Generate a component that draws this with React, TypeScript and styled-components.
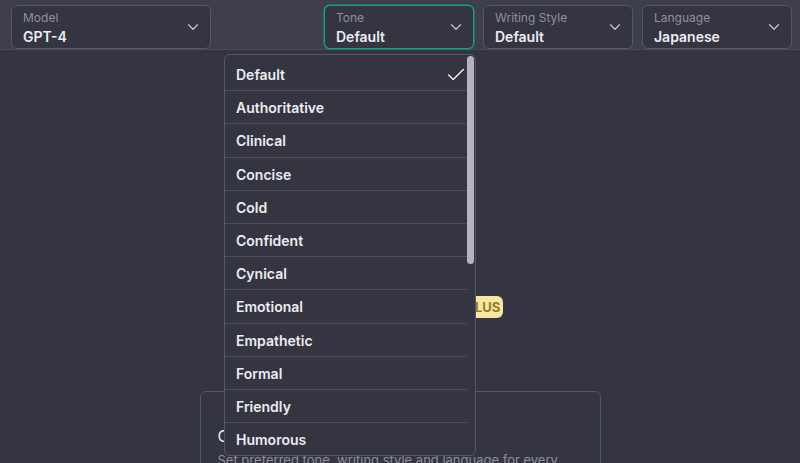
import React from 'react';
import styled, { createGlobalStyle, css } from 'styled-components';
import { Check, ChevronDown } from 'lucide-react';

const GlobalStyle = createGlobalStyle`
  html, body {
    margin: 0;
    padding: 0;
    background: #343541;
  }
  body {
    font-family: Inter, 'Noto Sans', 'Liberation Sans', sans-serif;
    -webkit-font-smoothing: antialiased;
  }
  * {
    box-sizing: border-box;
  }
`;

const Page = styled.div`
  height: 463px;
  overflow: hidden;
  display: flex;
  flex-direction: column;
  background: #343541;
  color: #ececf1;
`;

const TopBar = styled.header`
  height: 54px;
  display: flex;
  align-items: flex-start;
  gap: 9px;
  padding: 5px 8px 0 11px;
  background: #3e3f4b;
  border-bottom: 1px solid #4b4c58;
  position: relative;
  z-index: 2;
`;

const SelectWrap = styled.div<{ $width: number; $push?: boolean }>`
  position: relative;
  width: ${(p) => p.$width}px;
  ${(p) =>
    p.$push &&
    css`
      margin-right: auto;
    `}
`;

const SelectBox = styled.div<{ $active?: boolean }>`
  height: 44px;
  display: flex;
  align-items: center;
  justify-content: space-between;
  padding: 0 8px 0 11px;
  background: #343541;
  border: 1px solid ${(p) => (p.$active ? '#10a37f' : '#565869')};
  box-shadow: ${(p) => (p.$active ? '0 0 0 0.5px #10a37f' : 'none')};
  border-radius: 6px;
  color: #c5c5d2;
`;

const SelectText = styled.div`
  display: flex;
  flex-direction: column;
`;

const SelectLabel = styled.span`
  font-size: 12px;
  line-height: 14px;
  color: #8e8ea0;
  margin-top: 2px;
`;

const SelectValue = styled.span`
  font-size: 14px;
  line-height: 18px;
  font-weight: 600;
  color: #ececf1;
  margin-top: 3px;
`;

const Menu = styled.div`
  position: absolute;
  top: 49px;
  left: -100px;
  width: 252px;
  height: 402px;
  background: #343541;
  border: 1px solid #565869;
  border-radius: 6px;
  overflow: hidden;
  z-index: 5;
`;

const MenuList = styled.ul`
  list-style: none;
  margin: 0;
  padding: 3px 8px 0 0;
  height: 100%;
  overflow-y: auto;
  scrollbar-width: none;

  &::-webkit-scrollbar {
    display: none;
  }
`;

const ScrollThumb = styled.div`
  position: absolute;
  top: 1px;
  right: 1px;
  width: 7px;
  height: 208px;
  border-radius: 4px;
  background: #b4b4be;
`;

const MenuItem = styled.li`
  height: 33.2px;
  display: flex;
  align-items: center;
  justify-content: space-between;
  padding: 1px 0 0 11px;
  border-bottom: 1px solid #4d4e5a;
  font-size: 14px;
  font-weight: 600;
  color: #ececf1;
`;

const Main = styled.main`
  flex: 1;
  display: flex;
  flex-direction: column;
  align-items: center;
  padding-top: 235px;
  gap: 62px;
`;

const TitleRow = styled.div`
  height: 44px;
  display: flex;
  align-items: center;
  gap: 6px;
  margin-left: 2px;
`;

const Title = styled.h1`
  margin: 0;
  font-size: 36px;
  font-weight: 600;
  color: #d9d9e3;
`;

const Badge = styled.span`
  padding: 2px 3px 2px 6px;
  border-radius: 6px;
  background: #fae69e;
  color: #927c2f;
  font-size: 13px;
  line-height: 18px;
  font-weight: 700;
`;

const Card = styled.section`
  width: 401px;
  flex-shrink: 0;
  padding: 32px 17px;
  border: 1px solid #565869;
  border-radius: 6px;
`;

const CardHeading = styled.h2`
  margin: 0;
  font-size: 16px;
  line-height: 24px;
  font-weight: 400;
  color: #ececf1;
`;

const CardText = styled.p`
  margin: 2px 0 0;
  font-size: 13px;
  line-height: 20px;
  color: #8e8ea0;
`;

const tones = [
  'Default',
  'Authoritative',
  'Clinical',
  'Concise',
  'Cold',
  'Confident',
  'Cynical',
  'Emotional',
  'Empathetic',
  'Formal',
  'Friendly',
  'Humorous',
  'Informative',
  'Inspirational',
  'Ironic',
  'Optimistic',
  'Pessimistic',
  'Playful',
  'Sarcastic',
  'Serious',
  'Sympathetic',
  'Tentative',
  'Warm',
];

function Select({ label, value, width, active, push, children }: {
  label: string;
  value: string;
  width: number;
  active?: boolean;
  push?: boolean;
  children?: React.ReactNode;
}) {
  return (
    <SelectWrap $width={width} $push={push}>
      <SelectBox $active={active}>
        <SelectText>
          <SelectLabel>{label}</SelectLabel>
          <SelectValue>{value}</SelectValue>
        </SelectText>
        <ChevronDown size={18} strokeWidth={1.6} />
      </SelectBox>
      {children}
    </SelectWrap>
  );
}

export default function App() {
  return (
    <Page>
      <GlobalStyle />
      <TopBar>
        <Select label="Model" value="GPT-4" width={200} push />
        <Select label="Tone" value="Default" width={150} active>
          <Menu>
            <MenuList>
              {tones.map((tone) => (
                <MenuItem key={tone}>
                  {tone}
                  {tone === 'Default' && <Check size={22} strokeWidth={1.6} color="#ececf1" />}
                </MenuItem>
              ))}
            </MenuList>
            <ScrollThumb />
          </Menu>
        </Select>
        <Select label="Writing Style" value="Default" width={150} />
        <Select label="Language" value="Japanese" width={150} />
      </TopBar>
      <Main>
        <TitleRow>
          <Title>ChatGPT</Title>
          <Badge>PLUS</Badge>
        </TitleRow>
        <Card>
          <CardHeading>Custom instructions</CardHeading>
          <CardText>Set preferred tone, writing style and language for every response.</CardText>
        </Card>
      </Main>
    </Page>
  );
}
